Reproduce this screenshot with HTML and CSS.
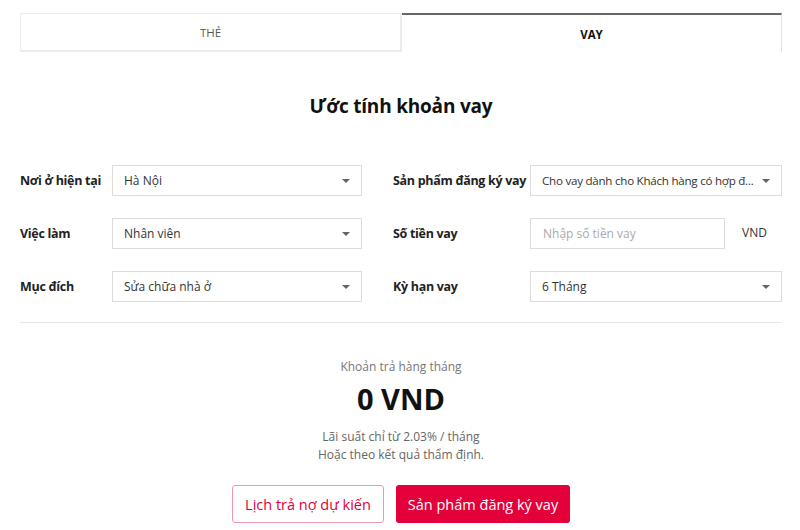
FILE: index.html
```html
<!DOCTYPE html>
<html lang="vi">
<head>
<meta charset="utf-8">
<link rel="stylesheet" href="styles.css">
</head>
<body>
<div class="wrap">
  <div class="tabs">
    <div class="tab">THẺ</div>
    <div class="tab active">VAY</div>
  </div>
  <h1 class="title">Ước tính khoản vay</h1>
  <div class="form">
    <div class="col col-left">
      <div class="row"><div class="label">Nơi ở hiện tại</div><div class="select"><span>Hà Nội</span><i class="caret"></i></div></div>
      <div class="row"><div class="label">Việc làm</div><div class="select"><span>Nhân viên</span><i class="caret"></i></div></div>
      <div class="row"><div class="label">Mục đích</div><div class="select"><span>Sửa chữa nhà ở</span><i class="caret"></i></div></div>
    </div>
    <div class="col col-right">
      <div class="row"><div class="label">Sản phẩm đăng ký vay</div><div class="select"><span class="long">Cho vay dành cho Khách hàng có hợp đ...</span><i class="caret"></i></div></div>
      <div class="row"><div class="label">Số tiền vay</div><div class="input-wrap"><div class="input">Nhập số tiền vay</div><div class="unit">VND</div></div></div>
      <div class="row"><div class="label">Kỳ hạn vay</div><div class="select"><span>6 Tháng</span><i class="caret"></i></div></div>
    </div>
  </div>
  <div class="divider"></div>
  <div class="result">
    <div class="result-label">Khoản trả hàng tháng</div>
    <div class="result-value">0 VND</div>
    <div class="result-note">Lãi suất chỉ từ 2.03% / tháng<br>Hoặc theo kết quả thẩm định.</div>
    <div class="actions">
      <div class="btn btn-outline">Lịch trả nợ dự kiến</div>
      <div class="btn btn-solid">Sản phẩm đăng ký vay</div>
    </div>
  </div>
</div>
</body>
</html>
```

FILE: styles.css
```css
* { box-sizing: border-box; }
html, body { margin: 0; padding: 0; background: #fff; }
body {
  font-family: "Open Sans", "Noto Sans", sans-serif;
  font-size: 12px;
  color: #222;
  width: 800px;
  height: 530px;
  overflow: hidden;
}
.wrap { padding: 13px 18px 0 20px; }
.tabs { display: flex; height: 39px; }
.tab {
  flex: 1;
  display: flex;
  align-items: center;
  justify-content: center;
  font-size: 11.5px;
  color: #555;
  border: 1px solid #ececec;
  border-right-width: 2px;
  border-bottom-width: 2px;
}
.tab.active {
  border: none;
  border-top: 2px solid #666;
  border-right: 1px solid #e2e2e2;
  color: #111;
  font-weight: 700;
  padding-top: 1px;
}
.title {
  margin: 39px 0 0;
  text-align: center;
  font-size: 19px;
  font-weight: 700;
  line-height: 30px;
  color: #111;
  letter-spacing: -0.2px;
}
.form { display: flex; gap: 31px; margin-top: 44px; }
.col { display: flex; flex-direction: column; gap: 22px; min-width: 0; }
.col-left { flex: 0 0 342px; }
.col-right { flex: 1 1 0; }
.row { display: flex; align-items: center; height: 31px; min-width: 0; }
.label { font-weight: 700; color: #222; font-size: 12.5px; white-space: nowrap; letter-spacing: -0.3px; flex: none; }
.col-left .label { width: 92px; }
.col-right .label { width: 137px; }
.select {
  flex: 1 1 0;
  height: 31px;
  border: 1px solid #dcdcdc;
  display: flex;
  align-items: center;
  padding: 0 10px 0 11px;
  gap: 8px;
  color: #333;
  min-width: 0;
}
.select span { flex: 1 1 0; min-width: 0; white-space: nowrap; }
.select .long { font-size: 11.6px; letter-spacing: -0.25px; }
.caret {
  flex: none;
  width: 0; height: 0;
  margin-right: 1px;
  border-left: 4px solid transparent;
  border-right: 4px solid transparent;
  border-top: 4px solid #666;
}
.input-wrap { flex: 1; display: flex; align-items: center; }
.input {
  width: 195px;
  height: 31px;
  border: 1px solid #dcdcdc;
  display: flex;
  align-items: center;
  padding-left: 12px;
  color: #aaa;
}
.unit { margin-left: 17px; color: #333; margin-top: -3px; }
.divider { height: 1px; background: #e6e6e6; margin: 20px 1px 0 0; }
.result { text-align: center; }
.result-label { margin-top: 35px; color: #777; line-height: 18px; }
.result-value { font-size: 29px; font-weight: 700; color: #111; line-height: 36px; margin-top: 5px; }
.result-note { margin-top: 11px; color: #666; line-height: 18px; }
.actions { display: flex; justify-content: center; gap: 12px; margin-top: 21px; }
.btn {
  height: 38px;
  display: flex;
  align-items: center;
  justify-content: center;
  font-size: 14.5px;
  border-radius: 3px;
}
.btn-outline { width: 152px; border: 1px solid #f29ab0; color: #e0003a; }
.btn-solid { width: 174px; background: #e4003a; color: #fff; }
```
